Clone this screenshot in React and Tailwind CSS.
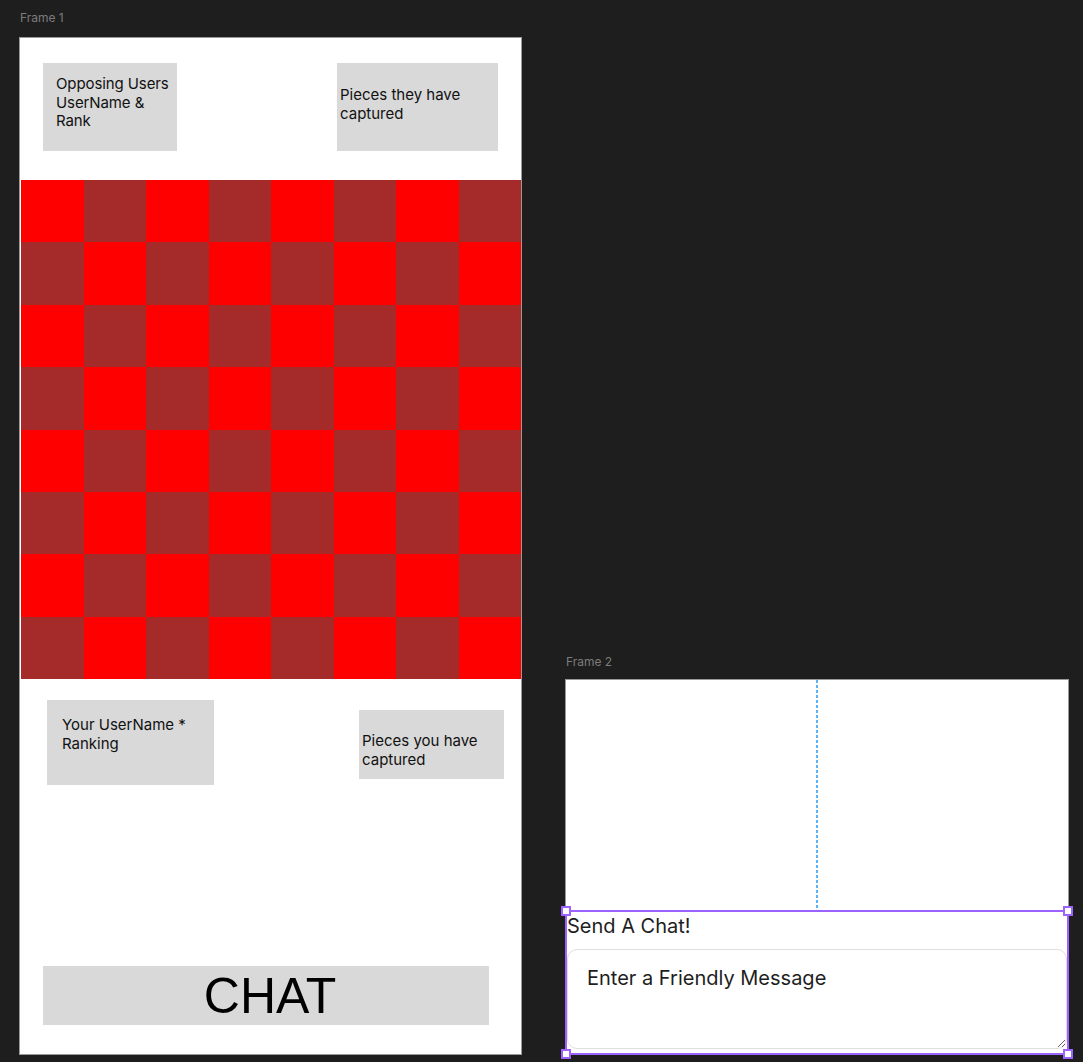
import React from "react";

const font = { fontFamily: "Inter, 'Noto Sans', sans-serif" };

function Board() {
  const cells = [];
  for (let r = 0; r < 8; r++) {
    for (let c = 0; c < 8; c++) {
      const red = (r + c) % 2 === 0;
      cells.push(
        <div key={`${r}-${c}`} className={red ? "bg-[#ff0000]" : "bg-[#a52a2a]"} />
      );
    }
  }
  return (
    <div className="ml-px grid h-[499px] w-[500px] grid-cols-8 grid-rows-8">{cells}</div>
  );
}

function Handle({ className }) {
  return (
    <div
      className={`absolute h-[10px] w-[10px] border-2 border-[#9d63ff] bg-white ${className}`}
    />
  );
}

export default function App() {
  return (
    <div
      className="relative h-[1062px] w-[1083px] overflow-hidden bg-[#1e1e1e]"
      style={font}
    >
      {/* Frame 1 */}
      <div className="absolute left-[20px] top-[10px] text-[12px] leading-[16px] text-[#7c7c7c]">
        Frame 1
      </div>
      <div className="absolute left-[19px] top-[37px] flex h-[1018px] w-[503px] flex-col border border-[#9a9a9a] bg-white text-[15px] leading-[18.5px] text-[#111]">
        <div className="flex items-start justify-between px-[23px] pt-[25px]">
          <div className="h-[88px] w-[134px] bg-[#d9d9d9] pl-[13px] pt-[12px] tracking-[-0.1px]">
            Opposing Users
            <br />
            UserName &amp;
            <br />
            Rank
          </div>
          <div className="h-[88px] w-[161px] bg-[#d9d9d9] pl-[3px] pt-[23px]">
            Pieces they have
            <br />
            captured
          </div>
        </div>
        <div className="mt-[29px]">
          <Board />
        </div>
        <div className="mt-[21px] flex items-start justify-between pl-[27px] pr-[17px]">
          <div className="h-[85px] w-[167px] bg-[#d9d9d9] pl-[15px] pt-[16px]">
            Your UserName *
            <br />
            Ranking
          </div>
          <div className="mt-[10px] h-[69px] w-[145px] bg-[#d9d9d9] pl-[3px] pt-[22px]">
            Pieces you have
            <br />
            captured
          </div>
        </div>
        <div className="mt-auto mb-[29px] ml-[23px] flex h-[59px] w-[446px] items-center justify-center bg-[#d9d9d9] pl-[8px]">
          <span
            className="text-[50px] leading-none text-black"
            style={{ fontFamily: "'Liberation Sans', Arial, sans-serif" }}
          >
            CHAT
          </span>
        </div>
      </div>

      {/* Frame 2 */}
      <div className="absolute left-[566px] top-[654px] text-[12px] leading-[16px] text-[#7c7c7c]">
        Frame 2
      </div>
      <div className="absolute left-[565px] top-[679px] flex h-[376px] w-[504px] flex-col border border-[#9a9a9a] bg-white">
        <div className="flex flex-1 justify-center">
          <div className="h-full w-[2px] bg-[repeating-linear-gradient(to_bottom,#5cb3f7_0px,#5cb3f7_3px,transparent_3px,transparent_5px)]" />
        </div>
        <div className="relative -mx-px -mb-px flex h-[145px] flex-col border-2 border-[#9d63ff]">
          <div className="pt-[2px] text-[20px] leading-[24px] text-[#1e1e1e]">
            Send A Chat!
          </div>
          <textarea
            className="mt-[11px] h-[100px] w-full resize-y rounded-[10px] border border-[#dedede] bg-white px-[19px] pt-[16px] text-[20px] leading-[24px] text-[#1e1e1e] outline-none placeholder:text-[#1e1e1e] placeholder:opacity-100"
            placeholder="Enter a Friendly Message"
          />
          <Handle className="-left-[6px] -top-[6px]" />
          <Handle className="-right-[6px] -top-[6px]" />
          <Handle className="-bottom-[6px] -left-[6px]" />
          <Handle className="-bottom-[6px] -right-[6px]" />
        </div>
      </div>
    </div>
  );
}
